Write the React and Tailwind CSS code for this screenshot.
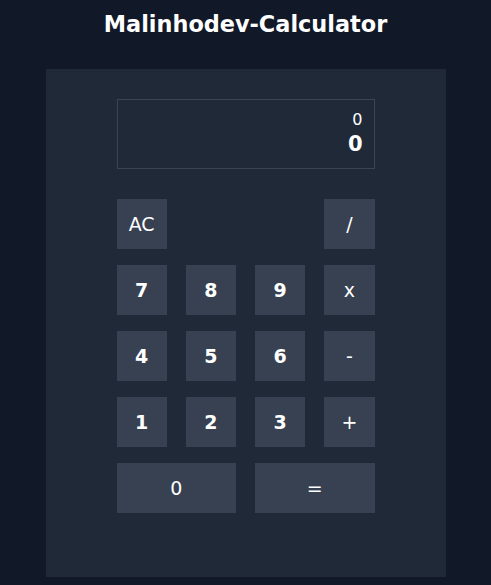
import React, { useState } from "react";

const keys = [
  { label: "AC", cls: "font-normal", col: "" },
  { label: "/", cls: "font-normal", col: "col-start-4" },
  { label: "7", cls: "font-bold" },
  { label: "8", cls: "font-bold" },
  { label: "9", cls: "font-bold" },
  { label: "x", cls: "font-normal" },
  { label: "4", cls: "font-bold" },
  { label: "5", cls: "font-bold" },
  { label: "6", cls: "font-bold" },
  { label: "-", cls: "font-normal" },
  { label: "1", cls: "font-bold" },
  { label: "2", cls: "font-bold" },
  { label: "3", cls: "font-bold" },
  { label: "+", cls: "font-normal" },
  { label: "0", cls: "font-normal", col: "col-span-2" },
  { label: "=", cls: "font-normal", col: "col-span-2" },
];

const App = () => {
  const [prev] = useState("0");
  const [current] = useState("0");

  return (
    <div
      className="min-h-screen bg-[#111827] text-white pt-2 pb-2"
      style={{ fontFamily: '"DejaVu Sans", sans-serif' }}
    >
      <h1 className="text-center font-bold text-[22.4px] leading-8">
        Malinhodev-Calculator
      </h1>
      <div className="mt-[29px] mx-auto w-[400px] h-[508px] bg-[#1f2937] pt-[30px] px-[71px]">
        <div className="h-[70px] border border-[#3a4453] flex flex-col items-end justify-center pr-[11px]">
          <div className="text-[16px] leading-5 font-normal">{prev}</div>
          <div className="text-[21px] leading-7 font-bold">{current}</div>
        </div>
        <div className="mt-[30px] grid grid-cols-4 gap-x-[19px] gap-y-4">
          {keys.map((k) => (
            <button
              key={k.label}
              className={`h-[50px] bg-[#374151] text-white text-[19px] flex items-center justify-center ${k.cls} ${k.col || ""}`}
            >
              {k.label}
            </button>
          ))}
        </div>
      </div>
    </div>
  );
};

export default App;
